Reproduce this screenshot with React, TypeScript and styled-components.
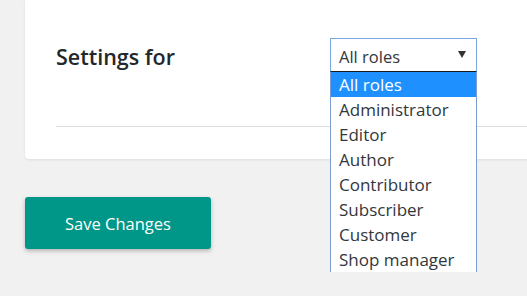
import styled, { createGlobalStyle } from "styled-components";

const GlobalStyle = createGlobalStyle`
  html, body {
    margin: 0;
    padding: 0;
    background: #f1f1f1;
    font-family: "Open Sans", "Noto Sans", sans-serif;
    overflow: hidden;
  }
`;

const Page = styled.div`
  width: 527px;
  height: 296px;
  padding-left: 25px;
  box-sizing: border-box;
  overflow: hidden;
`;

const Card = styled.div`
  width: 540px;
  background: #fff;
  border-radius: 0 0 0 4px;
  box-shadow: 0 1px 3px rgba(0, 0, 0, 0.08);
  padding: 38px 0 32px 31px;
  box-sizing: border-box;
`;

const Row = styled.div`
  display: grid;
  grid-template-columns: 274px 147px;
  align-items: center;
  height: 34px;
`;

const Title = styled.h2`
  margin: 0;
  padding-top: 3px;
  font-size: 21.5px;
  font-weight: 600;
  color: #23282d;
`;

const SelectWrap = styled.div`
  position: relative;
  height: 34px;
`;

const SelectBox = styled.div`
  display: flex;
  align-items: center;
  justify-content: space-between;
  height: 34px;
  box-sizing: border-box;
  padding: 2px 10px 0 8px;
  border: 1px solid #7aa7e0;
  border-bottom-color: #1a1a1a;
  font-size: 16.5px;
  color: #32373c;
`;

const Arrow = styled.span`
  width: 0;
  height: 0;
  border-left: 4px solid transparent;
  border-right: 4px solid transparent;
  border-top: 7px solid #333;
  margin-bottom: 4px;
`;

const List = styled.ul`
  position: absolute;
  top: 34px;
  left: 0;
  width: 147px;
  margin: 0;
  padding: 0;
  list-style: none;
  box-sizing: border-box;
  border-left: 1px solid #7a9cd3;
  border-right: 1px solid #7a9cd3;
  background: #fff;
  z-index: 2;
`;

const Option = styled.li<{ $active?: boolean }>`
  height: 25px;
  line-height: 25px;
  padding-left: 8px;
  font-size: 17px;
  white-space: nowrap;
  color: ${(p) => (p.$active ? "#fff" : "#32373c")};
  background: ${(p) => (p.$active ? "#1e90ff" : "transparent")};
`;

const Divider = styled.hr`
  margin: 54px 0 0;
  border: 0;
  border-top: 1px solid #dcdcde;
`;

const SaveButton = styled.button`
  margin-top: 38px;
  width: 186px;
  height: 52px;
  border: 0;
  border-radius: 3px;
  background: #009688;
  color: #fff;
  font-family: "Open Sans", "Noto Sans", sans-serif;
  font-size: 16.5px;
  box-shadow: 0 2px 4px rgba(0, 0, 0, 0.25);
  cursor: pointer;
`;

const roles = [
  "All roles",
  "Administrator",
  "Editor",
  "Author",
  "Contributor",
  "Subscriber",
  "Customer",
  "Shop manager",
];

const App = () => {
  return (
    <Page>
      <GlobalStyle />
      <Card>
        <Row>
          <Title>Settings for</Title>
          <SelectWrap>
            <SelectBox>
              <span>All roles</span>
              <Arrow />
            </SelectBox>
            <List>
              {roles.map((r, i) => (
                <Option key={r} $active={i === 0}>
                  {r}
                </Option>
              ))}
            </List>
          </SelectWrap>
        </Row>
        <Divider />
      </Card>
      <SaveButton>Save Changes</SaveButton>
    </Page>
  );
};

export default App;
